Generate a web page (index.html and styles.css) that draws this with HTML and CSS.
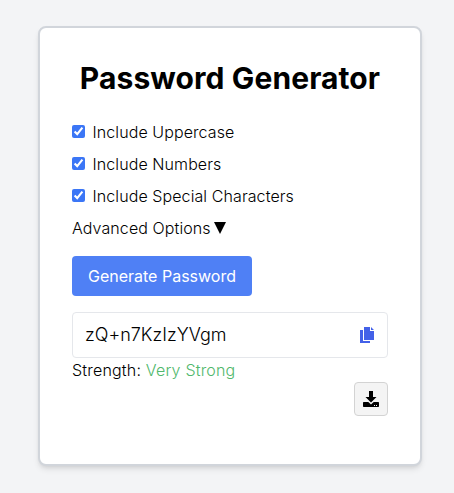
FILE: index.html
```html
<!DOCTYPE html>
<html lang="en">
<head>
<meta charset="utf-8">
<title>Password Generator</title>
<link rel="stylesheet" href="styles.css">
</head>
<body>
<main class="card">
  <h1 class="title">Password Generator</h1>
  <label class="option"><input type="checkbox" checked><span>Include Uppercase</span></label>
  <label class="option"><input type="checkbox" checked><span>Include Numbers</span></label>
  <label class="option"><input type="checkbox" checked><span>Include Special Characters</span></label>
  <div class="advanced">Advanced Options<svg class="caret" viewBox="0 0 12 12"><path d="M0 0h12L6 12z"/></svg></div>
  <button class="generate">Generate Password</button>
  <div class="result">
    <span>zQ+n7KzIzYVgm</span>
    <svg class="copy" viewBox="0 0 14 16"><path d="M4 0h6v4h4v9H4zM11 0l3 3h-3zM0 3h3v11h7v2H0z"/></svg>
  </div>
  <div class="strength">Strength: <span class="level">Very Strong</span></div>
  <button class="download" aria-label="Download"><svg viewBox="0 0 16 16"><path d="M6 0h4v6h3.500L8 11.500 2.500 6H6zM.7 11h4.600L8 13.400 10.700 11h4.600q.7 0 .7.700v3.600q0 .7-.7.700H.7Q0 16 0 15.300v-3.600Q0 11 .7 11z"/><path class="lights" d="M11 14h1v1h-1zM13 14h1v1h-1z"/></svg></button>
</main>
</body>
</html>
```
FILE: styles.css
```css
* { box-sizing: border-box; }
body {
  margin: 0;
  height: 493px;
  padding: 26px 32px 0 38px;
  background: #f3f4f6;
  font-family: Inter, sans-serif;
  font-size: 16px;
  font-weight: 300;
  line-height: 24px;
  color: #000;
}
.card {
  display: flex;
  flex-direction: column;
  width: 384px;
  height: 440px;
  padding: 32px 32px 0;
  background: #fff;
  border: 2px solid #d1d5db;
  border-radius: 8px;
  box-shadow: 0 4px 6px -1px rgba(0, 0, 0, .1), 0 2px 4px -2px rgba(0, 0, 0, .1);
}
.title { margin: 0 -2px 24px; font-size: 30px; line-height: 36px; letter-spacing: .1px; text-align: center; white-space: nowrap; }
.option { display: flex; align-items: center; gap: 8px; margin-bottom: 8px; letter-spacing: .09px; }
.option input { width: 13px; height: 13px; margin: 0 0 2px; accent-color: #3b76f6; }
.option span { margin-left: -.5px; }
.advanced { display: flex; align-items: center; letter-spacing: .1px; }
.caret { width: 12px; height: 12px; margin: 0 0 1px 3px; }
.generate {
  width: 180px; height: 40px; margin-top: 16px; padding: 0;
  border: 0; border-radius: 4px; background: #4f80f5; color: #fff; font: inherit; font-weight: 400;
}
.result {
  display: flex; align-items: center; justify-content: space-between;
  height: 46px; margin-top: 16px; padding: 0 13px 0 12px;
  border: 1px solid #e5e7eb; border-radius: 4px; font-size: 18px;
}
.copy { width: 14px; height: 16px; fill: #4361e8; }
.strength { letter-spacing: .19px; }
.level { color: #50b86c; }
.download {
  display: flex; align-items: center; justify-content: center;
  align-self: flex-end; width: 34px; height: 34px; padding: 0;
  border: 1px solid #d3d3d3; border-radius: 4px; background: #f4f4f4;
}
.download svg { width: 16px; height: 16px; }
.lights { fill: #f4f4f4; }
```
